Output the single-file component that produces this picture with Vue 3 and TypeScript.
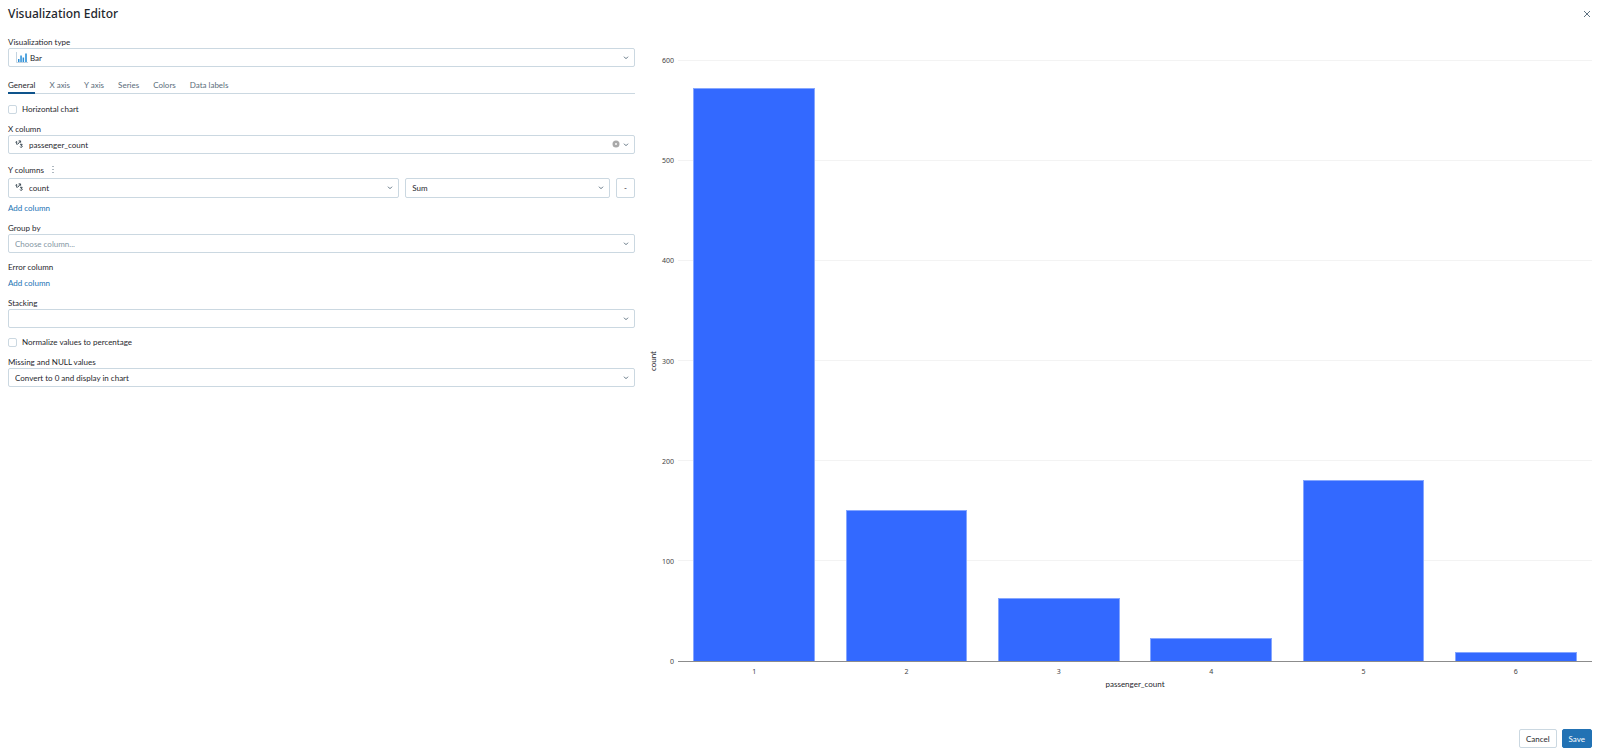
<script setup lang="ts">
import { ref } from 'vue'

interface Bar {
  label: string
  value: number
}

const tabs: string[] = ['General', 'X axis', 'Y axis', 'Series', 'Colors', 'Data labels']
const activeTab = ref('General')
const horizontal = ref(false)
const normalize = ref(false)

const axisMax = 600
const ticks: number[] = [0, 100, 200, 300, 400, 500, 600]
const bars: Bar[] = [
  { label: '1', value: 573 },
  { label: '2', value: 151 },
  { label: '3', value: 63 },
  { label: '4', value: 23 },
  { label: '5', value: 181 },
  { label: '6', value: 9 },
]

const percent = (value: number): string => `${(value / axisMax) * 100}%`
</script>

<template>
  <main class="editor">
    <header class="header">
      <h1 class="title">Visualization Editor</h1>
      <button class="close" type="button" aria-label="Close">
        <svg viewBox="0 0 8 8" width="8" height="8"><path d="M1 1l6 6M7 1L1 7" /></svg>
      </button>
    </header>

    <div class="body">
      <form class="form" @submit.prevent>
        <div class="field">
          <label class="label" for="viz-type">Visualization type</label>
          <div class="select-box">
            <svg class="lead bar-icon" viewBox="0 0 12 11" width="12" height="11">
              <path d="M.5 0v10.500H12" fill="none" stroke="#c3d3e0" />
              <path d="M2 7h1.500v3H2zM4.300 3.500h1.500V10H4.300zM6.600 5.500h1.500V10H6.600zM9.200 1.500h1.600V10H9.200z" fill="#2a8fd8" />
            </svg>
            <select id="viz-type" class="select select-bar">
              <option>Bar</option>
            </select>
            <svg class="chevron" viewBox="0 0 6 4" width="6" height="4"><path d="M1 .7l2 2 2-2" /></svg>
          </div>
        </div>

        <nav class="tabs" role="tablist">
          <button
            v-for="tab in tabs"
            :key="tab"
            type="button"
            role="tab"
            class="tab"
            :class="{ active: tab === activeTab }"
            :aria-selected="tab === activeTab"
            @click="activeTab = tab"
          >
            {{ tab }}
          </button>
        </nav>

        <label class="check"><input v-model="horizontal" type="checkbox" />Horizontal chart</label>

        <div class="field">
          <label class="label" for="x-column">X column</label>
          <div class="select-box">
            <svg class="lead" viewBox="0 0 9 8" width="9" height="8">
              <path d="M.5 2.300l1.200-.8v3M2.500 4.500l3-3.500M3.600 .9h2v1.800M5 4.300h2.200L6.200 5.400c1.500 0 1.500 1.900-.1 1.900-.6 0-1-.3-1.100-.6" />
            </svg>
            <select id="x-column" class="select select-icon">
              <option>passenger_count</option>
            </select>
            <button class="clear" type="button" aria-label="Clear X column">
              <svg viewBox="0 0 8 8" width="8" height="8">
                <circle cx="4" cy="4" r="3.500" fill="#a9a9a9" />
                <path d="M3 3l2 2M5 3L3 5" stroke="#fff" stroke-width=".7" />
              </svg>
            </button>
            <svg class="chevron" viewBox="0 0 6 4" width="6" height="4"><path d="M1 .7l2 2 2-2" /></svg>
          </div>
        </div>

        <div class="field">
          <div class="label-row">
            <label for="y-column">Y columns</label>
            <button class="dots" type="button" aria-label="Y column options">
              <svg viewBox="0 0 2 8" width="2" height="8"><path d="M.5 0h1v1h-1zM.5 3h1v1h-1zM.5 6h1v1h-1z" fill="#5f7281" /></svg>
            </button>
          </div>
          <div class="y-row">
            <div class="select-box">
              <svg class="lead" viewBox="0 0 9 8" width="9" height="8">
                <path d="M.5 2.300l1.200-.8v3M2.500 4.500l3-3.500M3.600 .9h2v1.800M5 4.300h2.200L6.200 5.400c1.500 0 1.500 1.900-.1 1.900-.6 0-1-.3-1.100-.6" />
              </svg>
              <select id="y-column" class="select select-icon">
                <option>count</option>
              </select>
              <svg class="chevron" viewBox="0 0 6 4" width="6" height="4"><path d="M1 .7l2 2 2-2" /></svg>
            </div>
            <div class="select-box">
              <select class="select" aria-label="Aggregation">
                <option>Sum</option>
              </select>
              <svg class="chevron" viewBox="0 0 6 4" width="6" height="4"><path d="M1 .7l2 2 2-2" /></svg>
            </div>
            <button class="button remove" type="button" aria-label="Remove column">-</button>
          </div>
          <button class="link" type="button">Add column</button>
        </div>

        <div class="field">
          <label class="label" for="group-by">Group by</label>
          <div class="select-box">
            <select id="group-by" class="select placeholder">
              <option>Choose column...</option>
            </select>
            <svg class="chevron" viewBox="0 0 6 4" width="6" height="4"><path d="M1 .7l2 2 2-2" /></svg>
          </div>
        </div>

        <div class="field">
          <span id="error-label" class="label">Error column</span>
          <button class="link" type="button" aria-describedby="error-label">Add column</button>
        </div>

        <div class="field">
          <label class="label" for="stacking">Stacking</label>
          <div class="select-box">
            <select id="stacking" class="select">
              <option></option>
            </select>
            <svg class="chevron" viewBox="0 0 6 4" width="6" height="4"><path d="M1 .7l2 2 2-2" /></svg>
          </div>
        </div>

        <label class="check"><input v-model="normalize" type="checkbox" />Normalize values to percentage</label>

        <div class="field">
          <label class="label" for="missing">Missing and NULL values</label>
          <div class="select-box">
            <select id="missing" class="select">
              <option>Convert to 0 and display in chart</option>
            </select>
            <svg class="chevron" viewBox="0 0 6 4" width="6" height="4"><path d="M1 .7l2 2 2-2" /></svg>
          </div>
        </div>
      </form>

      <section class="chart" aria-label="count by passenger_count">
        <div class="y-title"><span>count</span></div>
        <div class="y-axis">
          <span v-for="tick in ticks" :key="tick" class="tick" :style="{ bottom: percent(tick) }">{{ tick }}</span>
        </div>
        <div class="plot">
          <div v-for="tick in ticks.slice(1)" :key="tick" class="grid-line" :style="{ bottom: percent(tick) }"></div>
          <div v-for="bar in bars" :key="bar.label" class="slot">
            <div class="bar" :style="{ height: percent(bar.value) }"></div>
          </div>
        </div>
        <div class="x-axis">
          <span v-for="bar in bars" :key="bar.label">{{ bar.label }}</span>
        </div>
        <div class="x-title">passenger_count</div>
      </section>
    </div>

    <footer class="footer">
      <button class="button" type="button">Cancel</button>
      <button class="button primary" type="button">Save</button>
    </footer>
  </main>
</template>

<style>
body {
  margin: 0;
  background: #fff;
}
</style>

<style scoped>
.editor,
.editor * {
  box-sizing: border-box;
}

.editor {
  display: flex;
  flex-direction: column;
  min-height: 100vh;
  padding: 0 8px 6px;
  color: #1f272d;
  font: 8px/12px Lato, 'Noto Sans', sans-serif;
}

button,
select,
input {
  margin: 0;
  padding: 0;
  border: 0;
  background: none;
  color: inherit;
  font: inherit;
}

button {
  cursor: pointer;
}

svg {
  display: block;
}

.header {
  display: flex;
  align-items: center;
  justify-content: space-between;
  height: 28px;
}

.title {
  margin: 0;
  font-family: 'Noto Sans', 'Open Sans', sans-serif;
  font-size: 12px;
  font-weight: 500;
  line-height: 20px;
}

.close {
  padding: 1px;
}

.close path {
  fill: none;
  stroke: #5f7281;
}

.body {
  display: grid;
  flex: 1;
  grid-template-columns: minmax(0, 627fr) minmax(0, 941fr);
  gap: 16px;
}

.form {
  display: flex;
  flex-direction: column;
  gap: 8px;
  padding-top: 8px;
}

.field {
  display: flex;
  flex-direction: column;
  align-items: stretch;
}

.label-row {
  display: flex;
  align-items: center;
  gap: 8px;
  height: 16px;
}

.select-box {
  position: relative;
  display: flex;
  height: 19px;
}

.select {
  width: 100%;
  height: 100%;
  padding: 0 24px 0 6px;
  border: 1px solid #cbd8e1;
  border-radius: 2px;
  background: #fff;
  appearance: none;
}

.select-icon {
  padding-left: 20px;
}

.select-bar {
  padding-left: 21px;
}

.placeholder {
  color: #8496a3;
}

.lead {
  position: absolute;
  top: 5px;
  left: 7px;
  fill: none;
  stroke: #3c4a54;
}

.bar-icon {
  top: 4px;
  left: 8px;
  stroke: none;
}

.chevron {
  position: absolute;
  top: 8px;
  right: 6px;
  fill: none;
  stroke: #5f7281;
  pointer-events: none;
}

.clear {
  position: absolute;
  top: 5px;
  right: 15px;
}

.tabs {
  display: flex;
  gap: 14px;
  height: 19px;
  margin-bottom: 1px;
  border-bottom: 1px solid #cbd8e1;
}

.tab {
  height: 19px;
  padding-top: 2px;
  border-bottom: 2px solid transparent;
  color: #5a6c7a;
}

.tab.active {
  border-color: #0e538b;
  color: #1f272d;
}

.check {
  display: flex;
  align-items: center;
  align-self: flex-start;
  gap: 5px;
  height: 12px;
}

.check input {
  width: 9px;
  height: 9px;
  border: 1px solid #cbd8e1;
  border-radius: 2px;
  appearance: none;
}

.check input:checked {
  background: #2272b4;
}

.y-row {
  display: grid;
  grid-template-columns: minmax(0, 392fr) minmax(0, 205fr) 19px;
  gap: 6px;
}

.y-row .select-box,
.y-row .remove {
  height: 20px;
}

.link {
  align-self: flex-start;
  margin-top: 4px;
  color: #2272b4;
}

.button {
  height: 19px;
  padding: 0 6px;
  border: 1px solid #cbd8e1;
  border-radius: 2px;
  background: #fff;
}

.button.remove {
  padding: 0;
}

.button.primary {
  border-color: #2272b4;
  background: #2272b4;
  color: #fff;
}

.chart {
  display: grid;
  grid-template-rows: minmax(0, 1fr) 16px 24px;
  grid-template-columns: 4px 23px minmax(0, 1fr);
  padding: 33px 0 27px;
}

.y-title {
  display: flex;
  align-items: center;
  justify-content: center;
}

.y-title span {
  writing-mode: vertical-rl;
  transform: rotate(180deg);
}

.y-axis {
  position: relative;
  color: #444;
  font-family: 'Noto Sans', sans-serif;
  font-size: 7px;
}

.tick {
  position: absolute;
  right: 4px;
  line-height: 12px;
  transform: translateY(50%);
}

.plot {
  position: relative;
  display: flex;
  border-bottom: 1px solid #8c8c8c;
}

.grid-line {
  position: absolute;
  right: 0;
  left: 0;
  height: 1px;
  background: #f3f3f3;
}

.slot {
  position: relative;
  display: flex;
  flex: 1;
  align-items: flex-end;
  justify-content: center;
}

.bar {
  width: 80%;
  border: 1px solid #85a6ff;
  border-bottom: 0;
  background: #3369ff;
}

.x-axis {
  display: flex;
  grid-column: 3;
  align-items: flex-end;
  color: #444;
  font-family: 'Noto Sans', sans-serif;
  font-size: 7px;
}

.x-axis span {
  flex: 1;
  text-align: center;
}

.x-title {
  grid-column: 3;
  text-align: center;
}

.footer {
  display: flex;
  justify-content: flex-end;
  gap: 5px;
}
</style>
